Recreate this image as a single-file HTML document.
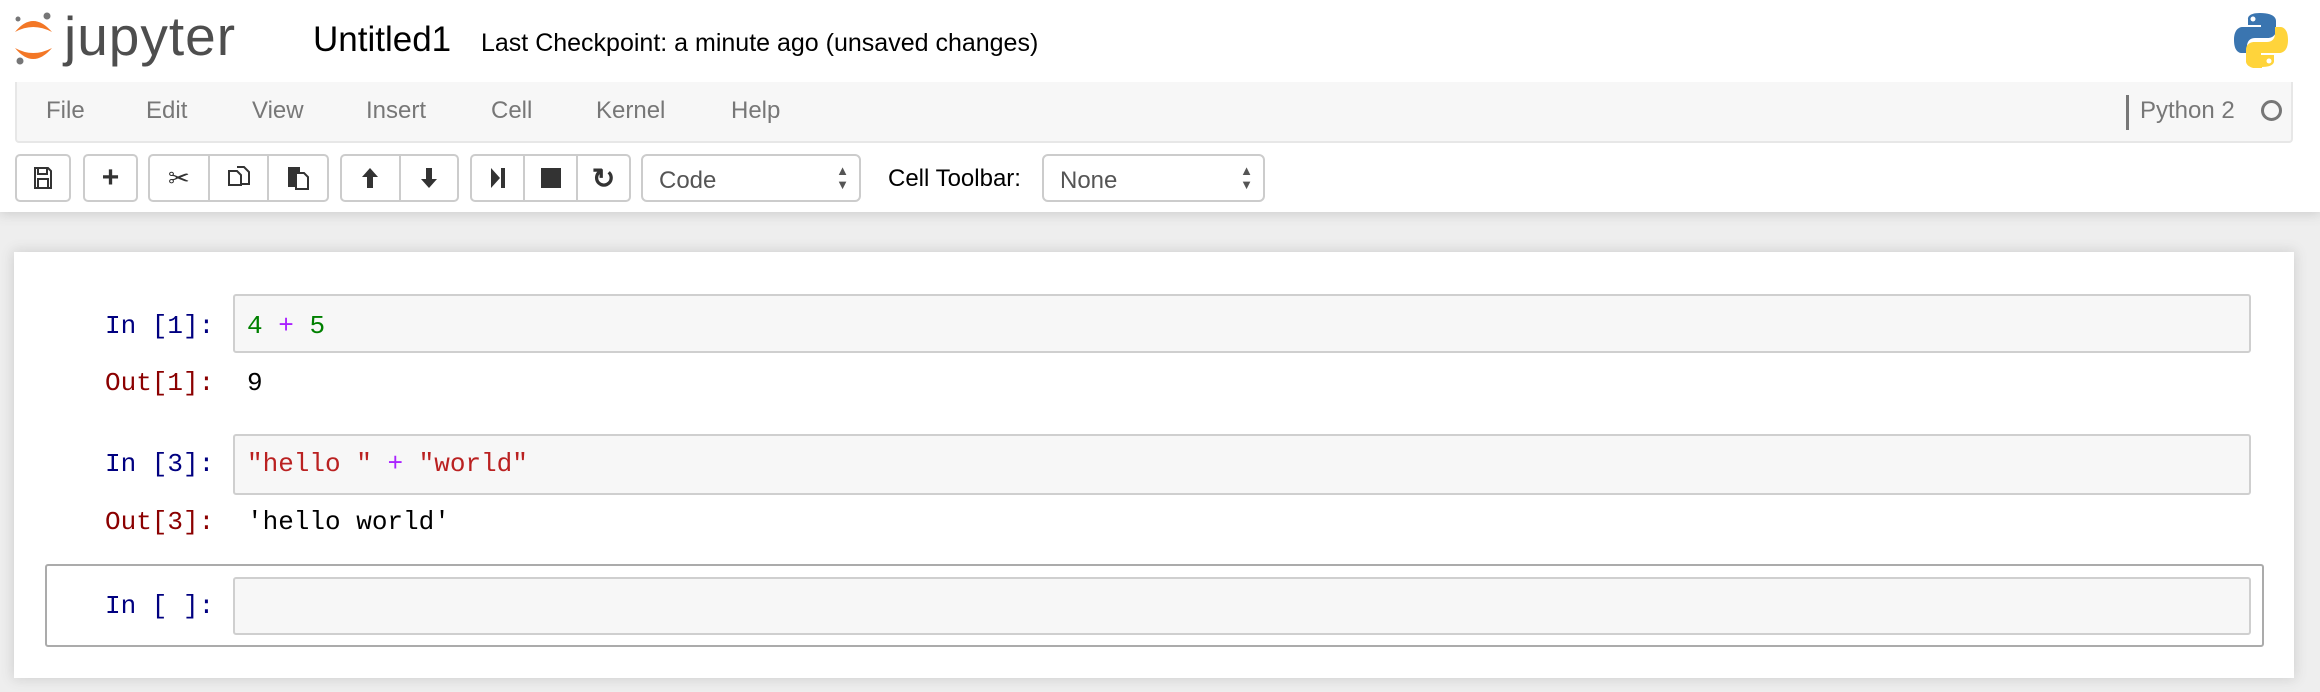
<!DOCTYPE html>
<html><head><meta charset="utf-8"><style>
*{box-sizing:border-box;margin:0;padding:0}
body{width:2320px;height:692px;background:#eee;font-family:"Liberation Sans",sans-serif;position:relative;overflow:hidden}
.abs{position:absolute}
#hdr{left:0;top:0;width:2320px;height:212px;background:#fff;box-shadow:0 0 12px 1px rgba(87,87,87,.25)}
.menu{left:15px;top:82px;width:2278px;height:61px;background:#f7f7f7;border:2px solid #e7e7e7;border-top:none;border-radius:0 0 4px 4px}
.mi{top:97px;font-size:24px;color:#777}
.btn{top:154px;height:48px;border:2px solid #ccc;background:#fff;border-radius:5px;display:flex}
.btn>div{flex:1;border-left:2px solid #ccc;display:flex;align-items:center;justify-content:center}
.btn>div:first-child{border-left:none}
.sel{top:154px;height:48px;border:2px solid #ccc;border-radius:6px;background:#fff;font-size:24px;color:#555;padding:11px 0 0 16px}
.arr{position:absolute;right:10px;top:8px;font-size:13px;line-height:14px;color:#555}
.mono{font-family:"Liberation Mono",monospace;font-size:26px}
.inp{background:#f7f7f7;border:2px solid #cfcfcf;border-radius:3px}
.pin{color:#000080}
.pout{color:#8b0000}
</style></head><body>
<div id="hdr" class="abs"></div>
<svg class="abs" style="left:12px;top:12px" width="44" height="56" viewBox="0 0 44 56">
<path d="M3 20 Q21 -2 40 20 Q21 10 3 20Z" fill="#f37726"/>
<path d="M3 36 Q21 58 40 36 Q21 46 3 36Z" fill="#f37726"/>
<circle cx="35" cy="4" r="3.5" fill="#767677"/><circle cx="6" cy="7" r="2.5" fill="#767677"/><circle cx="8" cy="49" r="3.5" fill="#767677"/>
</svg>
<div class="abs" style="left:64px;top:4px;font-size:55px;color:#4e4e4e;letter-spacing:1px">jupyter</div>
<div class="abs" style="left:313px;top:20px;font-size:35px;color:#000">Untitled1</div>
<div class="abs" style="left:481px;top:29px;font-size:25px;color:#000">Last Checkpoint: a minute ago (unsaved changes)</div>
<svg class="abs" style="left:2233px;top:12px" width="56" height="56" viewBox="0 0 56 56">
<path d="M27 1C14 1 15 7 15 7v6h13v2H10S1 14 1 28s8 13 8 13h5v-7s0-8 8-8h13s8 0 8-8V9s1-8-16-8z" fill="#3a75b0"/>
<circle cx="20" cy="7" r="2.5" fill="#fff"/>
<path d="M29 55c13 0 12-6 12-6v-6H28v-2h18s9 1 9-13-8-13-8-13h-5v7s0 8-8 8H21s-8 0-8 8v11s-1 8 16 8z" fill="#ffd43b"/>
<circle cx="36" cy="49" r="2.5" fill="#fff"/>
</svg>
<div class="abs menu"></div>
<div class="abs mi" style="left:46px">File</div>
<div class="abs mi" style="left:146px">Edit</div>
<div class="abs mi" style="left:252px">View</div>
<div class="abs mi" style="left:366px">Insert</div>
<div class="abs mi" style="left:491px">Cell</div>
<div class="abs mi" style="left:596px">Kernel</div>
<div class="abs mi" style="left:731px">Help</div>
<div class="abs" style="left:2126px;top:95px;width:3px;height:35px;background:#777"></div>
<div class="abs" style="left:2140px;top:97px;font-size:24px;color:#777">Python 2</div>
<div class="abs" style="left:2261px;top:100px;width:21px;height:21px;border:3px solid #777;border-radius:50%"></div>

<div class="abs btn" style="left:15px;width:56px"><div><svg width="18" height="22" viewBox="0 0 18 22"><path d="M1 1h13l3 3v17H1z M4 1v6h9V1 M4 12h10v9H4z" fill="none" stroke="#333" stroke-width="2"/></svg></div></div>
<div class="abs btn" style="left:83px;width:55px"><div style="font-size:30px;font-weight:bold;color:#333">+</div></div>
<div class="abs btn" style="left:148px;width:181px"><div style="font-size:26px;color:#333">✂</div><div><svg width="24" height="26" viewBox="0 0 24 26"><path d="M2 6h8l4 4v10H2z M10 2h7l5 5v12h-8" fill="#fff" stroke="#333" stroke-width="2"/></svg></div><div><svg width="24" height="26" viewBox="0 0 24 26"><path d="M2 2h12v20H2z" fill="#333"/><path d="M10 8h8l4 4v12H10z" fill="#fff" stroke="#333" stroke-width="2"/></svg></div></div>
<div class="abs btn" style="left:340px;width:119px"><div><svg width="20" height="24" viewBox="0 0 20 24"><path d="M10 2L2 11h5v11h6V11h5z" fill="#333"/></svg></div><div><svg width="20" height="24" viewBox="0 0 20 24"><path d="M10 22L2 13h5V2h6v11h5z" fill="#333"/></svg></div></div>
<div class="abs btn" style="left:470px;width:161px"><div><svg width="18" height="22" viewBox="0 0 18 22"><path d="M2 1l9 10-9 10z" fill="#333"/><rect x="12" y="1" width="4" height="20" fill="#333"/></svg></div><div><div style="width:20px;height:20px;background:#333"></div></div><div style="font-size:28px;font-weight:bold;color:#333">↻</div></div>
<div class="abs sel" style="left:641px;width:220px">Code<div class="arr">▲<br>▼</div></div>
<div class="abs" style="left:888px;top:165px;font-size:24px;color:#000">Cell Toolbar:</div>
<div class="abs sel" style="left:1042px;width:223px">None<div class="arr">▲<br>▼</div></div>

<div class="abs" style="left:14px;top:252px;width:2280px;height:426px;background:#fff;box-shadow:0 0 12px 1px rgba(87,87,87,.2)"></div>
<div class="abs mono pin" style="left:105px;top:311px">In [1]:</div>
<div class="abs inp" style="left:233px;top:294px;width:2018px;height:59px"></div>
<div class="abs mono" style="left:247px;top:311px"><span style="color:#008000">4</span> <span style="color:#aa22ff">+</span> <span style="color:#008000">5</span></div>
<div class="abs mono pout" style="left:105px;top:368px">Out[1]:</div>
<div class="abs mono" style="left:247px;top:368px">9</div>
<div class="abs mono pin" style="left:105px;top:449px">In [3]:</div>
<div class="abs inp" style="left:233px;top:434px;width:2018px;height:61px"></div>
<div class="abs mono" style="left:247px;top:449px;color:#ba2121">"hello " <span style="color:#aa22ff">+</span> "world"</div>
<div class="abs mono pout" style="left:105px;top:507px">Out[3]:</div>
<div class="abs mono" style="left:247px;top:507px">'hello world'</div>
<div class="abs" style="left:45px;top:564px;width:2219px;height:83px;border:2px solid #ababab;border-radius:3px"></div>
<div class="abs mono pin" style="left:105px;top:591px">In [ ]:</div>
<div class="abs inp" style="left:233px;top:577px;width:2018px;height:58px"></div>
</body></html>
